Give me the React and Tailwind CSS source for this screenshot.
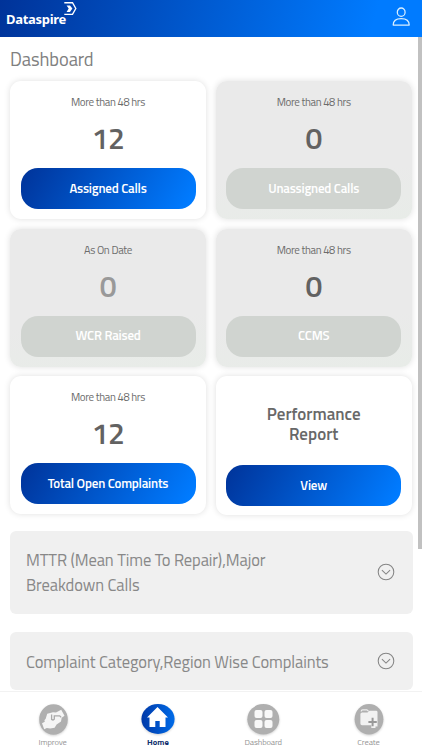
import React from "react";

const shadow = "shadow-[0_0_6px_rgba(0,0,0,0.13)]";
const blue = "bg-[linear-gradient(120deg,#003399_0%,#007bff_95%)]";

function Card({ note, value, label, active, dim }) {
  return (
    <section
      className={`flex h-[138px] flex-col items-center rounded-[11px] px-[10.5px] ${shadow} ${
        active ? "bg-white" : "bg-[linear-gradient(175deg,#eaeaea_65%,#e8ece8_100%)]"
      }`}
    >
      <p className="mt-[13px] h-4 text-[11px] leading-4 tracking-[-0.36px] text-[#6c6c6c]">{note}</p>
      <p
        className={`mt-[10px] h-9 text-[30px] font-semibold leading-9 tracking-[-0.5px] ${
          dim ? "text-[#999]" : "text-[#626262]"
        }`}
      >
        {value}
      </p>
      <button
        className={`mt-[12px] h-[41px] w-full rounded-[17px] text-[13px] font-semibold tracking-[-0.2px] text-white ${
          active ? blue : "bg-[#d0d4d0]"
        }`}
      >
        {label}
      </button>
    </section>
  );
}

function Chevron() {
  return (
    <svg width="18" height="18" viewBox="0 0 18 18" fill="none" stroke="#858585" strokeWidth="1.05">
      <circle cx="9" cy="9" r="7.8" />
      <path d="M4.9 7.2 9 11.1l4.1-3.9" />
    </svg>
  );
}

function Panel({ children, className }) {
  return (
    <section className={`flex shrink-0 items-center justify-between rounded-[6px] bg-[#f0f0f0] pl-4 pr-[17.5px] ${className}`}>
      <p className="whitespace-nowrap text-[16.5px] leading-[25.5px] tracking-[-0.1px] text-[#888]">{children}</p>
      <Chevron />
    </section>
  );
}

function NavItem({ label, active, children }) {
  return (
    <a className="flex w-[105.3px] flex-col items-center pt-[11px]">
      {children}
      <span
        className={`h-3 text-[8.5px] leading-3 ${active ? "font-bold text-[#12316f]" : "tracking-[-0.15px] text-[#969696]"}`}
      >
        {label}
      </span>
    </a>
  );
}

const round = "drop-shadow-[0_1px_1px_rgba(0,0,0,0.18)]";

export default function App() {
  return (
    <div className="flex h-[750px] w-[422px] flex-col overflow-hidden bg-white font-['Titillium_Web',Roboto,sans-serif]">
      <header className="flex h-[37px] shrink-0 items-start justify-between bg-[linear-gradient(105deg,#003399_0%,#007bff_88%)] pl-[6px] pr-[12px]">
        <div className="flex items-start">
          <span className="mt-[9px] w-[61px] whitespace-nowrap font-['Noto_Sans',sans-serif] text-[13px] font-bold leading-5 tracking-[-0.3px] text-white">
            Dataspire
          </span>
          <svg className="-ml-[4px] mt-[1px]" width="16" height="15" viewBox="0 0 16 15" fill="none" stroke="#fff">
            <path d="M1.3 1.7h8.2l3.3 5.8-3.3 5.8H1.3" strokeWidth="1.35" />
            <path d="M3.6 4.5h3.4l2.4 3L7 10.9H3.6L5.7 7.5Z" fill="#fff" stroke="none" />
          </svg>
        </div>
        <svg className="mt-[7px]" width="18" height="20" viewBox="0 0 18 20" fill="none" stroke="#d9efff" strokeWidth="1.25">
          <ellipse cx="9.2" cy="5.2" rx="3.9" ry="4.2" />
          <path d="M1.2 18c0-4.1 3.2-6.4 8-6.4s8 2.3 8 6.4Z" strokeLinejoin="round" />
        </svg>
      </header>

      <div className="flex min-h-0 flex-1">
        <main className="flex w-[418px] flex-col overflow-hidden pl-[10px] pr-[10px]">
          <h1 className="mt-[10px] h-6 shrink-0 text-[18.5px] leading-6 tracking-[-0.1px] text-[#808080]">Dashboard</h1>
          <div className="mt-[10px] grid shrink-0 grid-cols-[196px_196px] gap-x-[9.7px] gap-y-[9.7px]">
            <Card note="More than 48 hrs" value="12" label="Assigned Calls" active />
            <Card note="More than 48 hrs" value="0" label="Unassigned Calls" />
            <Card note="As On Date" value="0" label="WCR Raised" dim />
            <Card note="More than 48 hrs" value="0" label="CCMS" />
            <Card note="More than 48 hrs" value="12" label="Total Open Complaints" active />
            <section className={`flex h-[139px] flex-col items-center rounded-[11px] bg-white px-[10.5px] ${shadow}`}>
              <h2 className="mt-[28px] text-center text-[17px] font-semibold leading-[20px] text-[#686868]">
                Performance
                <br />
                Report
              </h2>
              <button className={`mt-[20.5px] h-[41px] w-full rounded-[17px] text-[13px] font-semibold tracking-[-0.2px] text-white ${blue}`}>
                View
              </button>
            </section>
          </div>
          <Panel className="mt-[15.5px] h-[83px] w-[402.5px]">
            MTTR (Mean Time To Repair),Major
            <br />
            Breakdown Calls
          </Panel>
          <Panel className="mt-[18.5px] h-[58px] w-[402.5px]">
            Complaint Category,Region Wise Complaints
          </Panel>
        </main>
        <div className="h-[512px] w-1 bg-[#c1c1c1]" />
      </div>

      <nav className="flex h-[59px] shrink-0 border-t border-[#f2f2f2] bg-white">
        <NavItem label="Improve">
          <svg className={round} width="34" height="33" viewBox="0 0 34 33">
            <ellipse cx="17.5" cy="16.5" rx="14.3" ry="15.3" fill="#afafaf" />
            <path
              d="m11.2 10.8 5.8-1.6 3 .3 5.2-2.8 3.3 6-2.8 2-.7 3.7-4.4 3.2-2 3.1-4.4.9-3.4-.6-2.6 1.3-2.2-6 2.8-1.6-.4-1.5 1.3-1.4Z"
              fill="#f5f5f5"
            />
            <path d="M15.6 11.4v5q1.7 1.2 2.7-.2v-3.4h5.4l1.5 1.6" fill="none" stroke="#aaa" strokeWidth="1.3" />
          </svg>
        </NavItem>
        <NavItem label="Home" active>
          <svg className={round} width="34" height="33" viewBox="0 0 34 33">
            <defs>
              <linearGradient id="homeBlue">
                <stop stopColor="#0039a8" />
                <stop offset="1" stopColor="#006be8" />
              </linearGradient>
            </defs>
            <ellipse cx="17" cy="16" rx="16.6" ry="15" fill="url(#homeBlue)" />
            <path d="M16.5 4 27 14.5H24.5v9.5h-5.8v-6h-4.4v6H8.5v-9.5H6Z" fill="#fff" />
          </svg>
        </NavItem>
        <NavItem label="Dashboard">
          <svg className={round} width="34" height="33" viewBox="0 0 34 33">
            <ellipse cx="17.3" cy="16.3" rx="16" ry="15.2" fill="#afafaf" />
            <g fill="#f8f8f8">
              <rect x="8.5" y="7" width="8" height="8" rx="2" />
              <rect x="18.5" y="7" width="8" height="8" rx="2" />
              <rect x="8.5" y="17" width="8" height="8" rx="2" />
              <rect x="18.5" y="17" width="8" height="8" rx="2" />
            </g>
          </svg>
        </NavItem>
        <NavItem label="Create">
          <svg className={round} width="34" height="33" viewBox="0 0 34 33">
            <ellipse cx="17" cy="16.3" rx="14.4" ry="15.2" fill="#afafaf" />
            <path d="M9.2 8.5q0-1.6 1.5-1.6h4.2l1.8 1.5" fill="none" stroke="#eee" strokeWidth="1.2" />
            <path
              d="M10.2 9.6h5.3l2-1.8h6.6q1.4 0 1.4 1.4v14.4h-2v1.4h-4.2v-2.8H10q-1.6 0-1.6-1.6v-9.4q0-1.6 1.8-1.6Z"
              fill="#f2f2f2"
            />
            <path d="M20.6 14.8v8.4M16.4 19h8.4" stroke="#999" strokeWidth="2" />
          </svg>
        </NavItem>
      </nav>
    </div>
  );
}
